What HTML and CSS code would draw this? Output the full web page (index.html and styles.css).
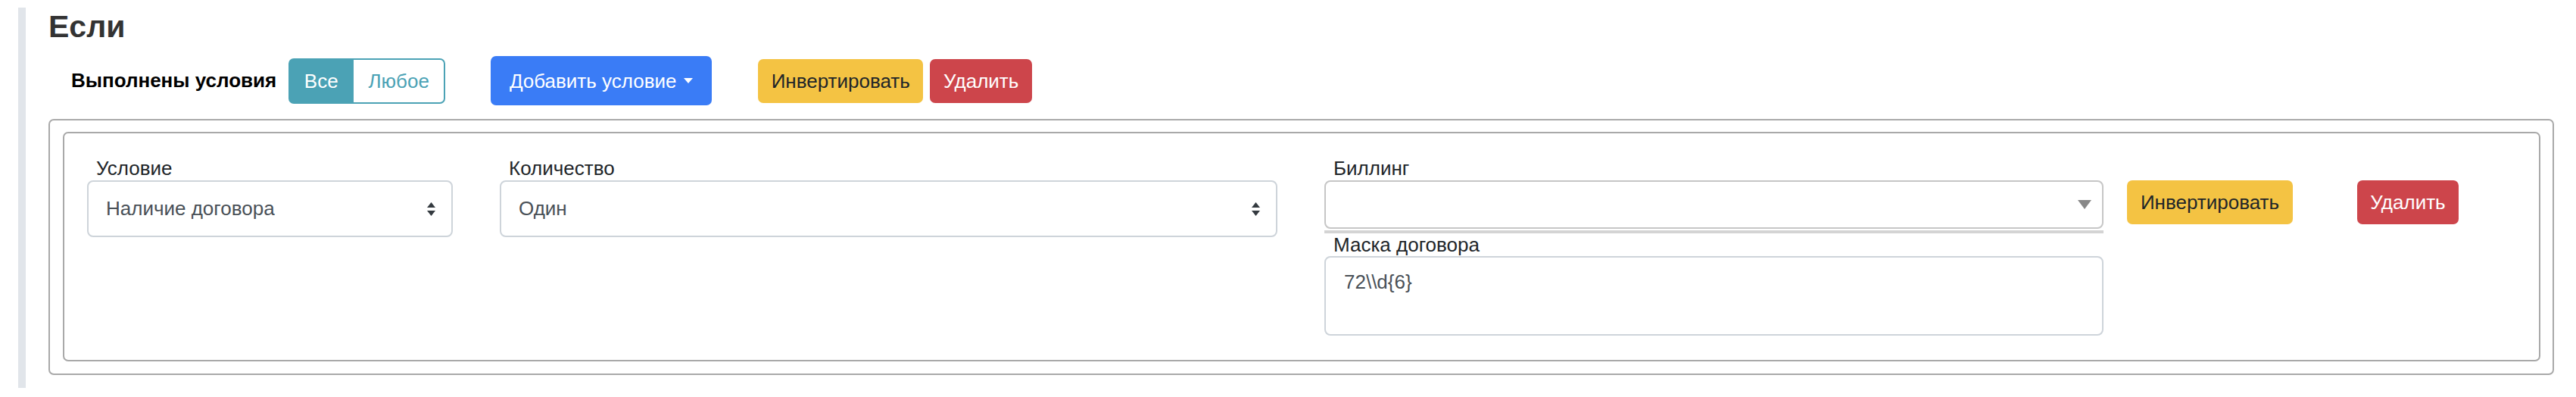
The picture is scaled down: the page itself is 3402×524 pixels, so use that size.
FILE: index.html
```html
<!DOCTYPE html>
<html lang="ru">
<head>
<meta charset="utf-8">
<title>Если</title>
<link rel="stylesheet" href="styles.css">
</head>
<body>
<div class="page">
  <h2 class="title">Если</h2>
  <div class="toolbar">
    <span class="match-label">Выполнены условия</span>
    <div class="toggle">
      <button class="toggle-btn active">Все</button>
      <button class="toggle-btn any">Любое</button>
    </div>
    <button class="btn btn-primary dropdown-toggle">Добавить условие</button>
    <div class="actions">
      <button class="btn btn-warning">Инвертировать</button>
      <button class="btn btn-danger">Удалить</button>
    </div>
  </div>
  <div class="group-card">
    <div class="cond-card">
      <div class="field f-cond">
        <label class="field-label">Условие</label>
        <div class="custom-select">
          <span>Наличие договора</span>
          <svg class="updown" width="11" height="18" viewBox="0 0 11 18"><path d="M5.5 0 L11 7 H0 Z"/><path d="M0 11 H11 L5.5 18 Z"/></svg>
        </div>
      </div>
      <div class="field f-count">
        <label class="field-label">Количество</label>
        <div class="custom-select">
          <span>Один</span>
          <svg class="updown" width="11" height="18" viewBox="0 0 11 18"><path d="M5.5 0 L11 7 H0 Z"/><path d="M0 11 H11 L5.5 18 Z"/></svg>
        </div>
      </div>
      <div class="field f-billing">
        <label class="field-label">Биллинг</label>
        <div class="select2-wrap">
          <div class="select2">
            <svg class="down" width="18" height="12" viewBox="0 0 18 12"><path d="M0 0 H18 L9 12 Z"/></svg>
          </div>
        </div>
        <label class="field-label sub">Маска договора</label>
        <div class="textarea">72\\d{6}</div>
      </div>
      <div class="row-actions">
        <button class="btn btn-warning">Инвертировать</button>
        <button class="btn btn-danger">Удалить</button>
      </div>
    </div>
  </div>
</div>
</body>
</html>
```

FILE: styles.css
```css
body {
  margin: 0;
  background: #fff;
  font-family: "Liberation Sans", Arial, Helvetica, sans-serif;
  font-size: 26px;
  color: #212529;
}

.page {
  margin: 10px 0 0 24px;
  border-left: 10px solid #e1e5ea;
  padding: 2px 29px 17px 30px;
}

.title {
  margin: 0;
  font-size: 41px;
  line-height: 46px;
  font-weight: 700;
  color: #333;
}

.toolbar {
  display: flex;
  align-items: center;
  height: 65px;
  margin-top: 16px;
  padding-left: 30px;
}

.match-label {
  font-weight: 700;
  color: #000;
}

.toggle {
  display: flex;
  margin-left: 16px;
}

.toggle-btn {
  font: inherit;
  height: 60px;
  padding: 0;
  border: 2px solid #4ba2b5;
  background: #fff;
  color: #4ba2b5;
  line-height: 1;
}

.toggle-btn.active {
  width: 86px;
  background: #4ba2b5;
  color: #fff;
  border-radius: 7px 0 0 7px;
}

.toggle-btn.any {
  width: 121px;
  border-left: 0;
  border-radius: 0 7px 7px 0;
}

.btn {
  font: inherit;
  line-height: 1;
  height: 58px;
  padding: 0;
  border: 0;
  border-radius: 7px;
  display: inline-flex;
  align-items: center;
  justify-content: center;
}

.btn-primary {
  width: 292px;
  height: 65px;
  margin-left: 60px;
  background: #3a7cf6;
  color: #fff;
}

.dropdown-toggle::after {
  content: "";
  margin-left: 10px;
  border-top: 7px solid #fff;
  border-left: 6px solid transparent;
  border-right: 6px solid transparent;
}

.btn-warning {
  width: 218px;
  background: #f4c343;
  color: #212529;
}

.btn-danger {
  width: 135px;
  background: #cd454b;
  color: #fff;
}

.actions {
  display: flex;
  gap: 9px;
  margin-left: 61px;
}

.group-card {
  margin-top: 18px;
  border: 2px solid #a9a9a9;
  border-radius: 7px;
  padding: 15px 16px 16px 17px;
}

.cond-card {
  display: flex;
  align-items: flex-start;
  border: 2px solid #a9a9a9;
  border-radius: 7px;
  padding: 31px 30px 32px;
}

.field-label {
  display: block;
  line-height: 31px;
  padding-left: 12px;
  color: #212529;
}

.field-label.sub {
  line-height: 30px;
}

.f-cond {
  width: 483px;
  margin-right: 62px;
}

.f-count {
  width: 1027px;
  margin-right: 62px;
}

.f-billing {
  width: 1029px;
  margin-right: 31px;
}

.custom-select {
  box-sizing: border-box;
  height: 75px;
  border: 2px solid #ced4da;
  border-radius: 8px;
  padding: 0 21px 0 23px;
  display: flex;
  align-items: center;
  justify-content: space-between;
  color: #495057;
}

.updown {
  fill: #343a40;
  display: block;
}

.select2-wrap {
  padding-bottom: 2px;
  border-bottom: 4px solid #d4d4d4;
}

.select2 {
  box-sizing: border-box;
  height: 64px;
  border: 2px solid #c6c6c6;
  border-radius: 8px;
  padding-right: 14px;
  display: flex;
  align-items: center;
  justify-content: flex-end;
}

.down {
  fill: #888;
  display: block;
}

.textarea {
  box-sizing: border-box;
  height: 105px;
  border: 2px solid #ced4da;
  border-radius: 8px;
  padding: 13px 24px;
  line-height: 39px;
  color: #495057;
}

.row-actions {
  display: flex;
  padding-top: 31px;
}

.row-actions .btn-warning {
  width: 219px;
}

.row-actions .btn-danger {
  width: 134px;
  margin-left: 85px;
}
```
